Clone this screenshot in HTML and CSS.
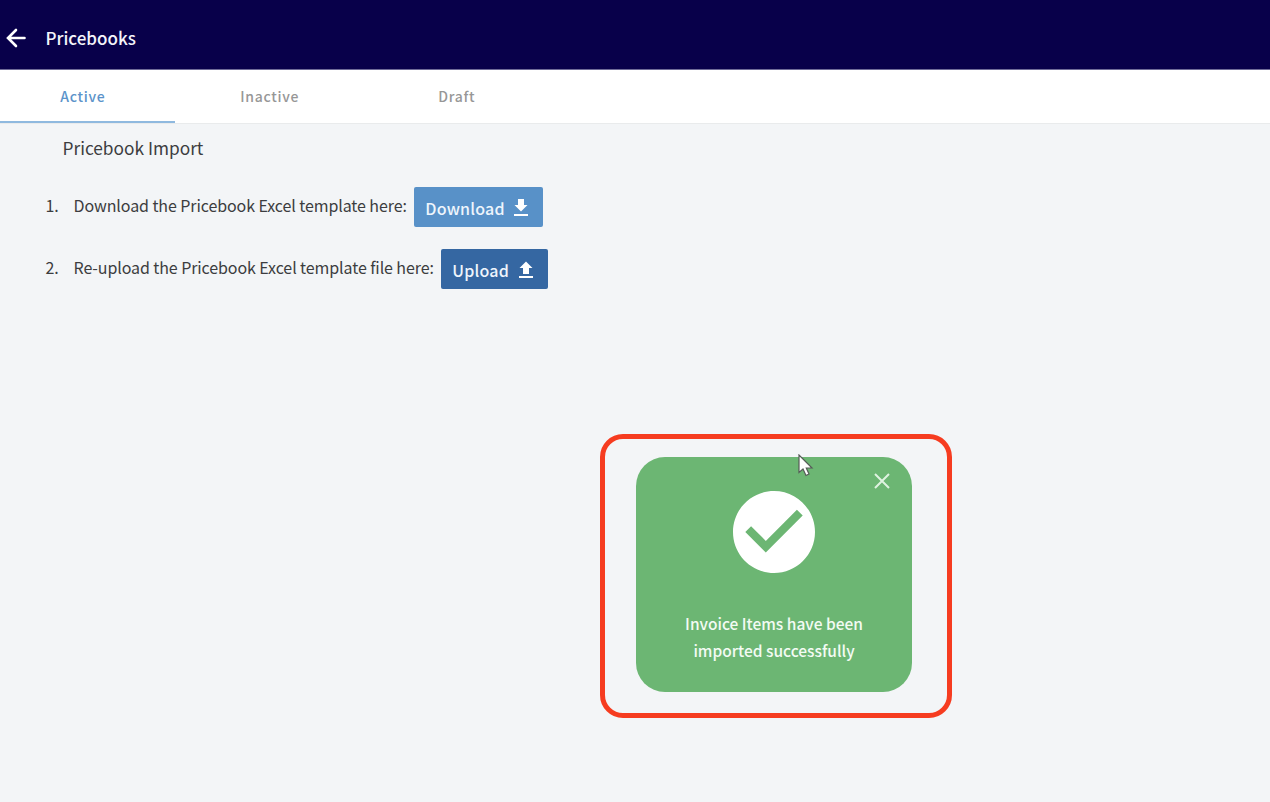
FILE: index.html
```html
<!DOCTYPE html>
<html lang="en">
<head>
    <meta charset="UTF-8">
    <meta name="viewport" content="width=device-width, initial-scale=1.0">
    <title>Pricebooks</title>
    <link rel="stylesheet" href="styles.css">
</head>
<body>
    <header class="top-bar">
        <a class="back-btn" href="#" aria-label="Back">
            <svg viewBox="0 0 20 20"><path d="M10 2 L2 10 L10 18 M2.5 10 H18.5"/></svg>
        </a>
        <h1>Pricebooks</h1>
    </header>
    <nav class="tabs">
        <a class="tab active" href="#">Active</a>
        <a class="tab" href="#">Inactive</a>
        <a class="tab" href="#">Draft</a>
    </nav>
    <main class="content">
        <h2>Pricebook Import</h2>
        <div class="step">
            <span class="step-number">1.</span>
            <span class="step-text">Download the Pricebook Excel template here:</span>
            <button class="btn download-btn">
                Download
                <svg viewBox="0 0 24 24"><path d="M18.5 9H15V3H9v6H5.5l6.5 6.5L18.5 9zM5 18v2h14v-2H5z"/></svg>
            </button>
        </div>
        <div class="step">
            <span class="step-number">2.</span>
            <span class="step-text">Re-upload the Pricebook Excel template file here:</span>
            <button class="btn upload-btn">
                Upload
                <svg viewBox="0 0 24 24"><path d="M9 16h6v-6h3.5L12 3.5 5.5 10H9zm-4 2h14v2H5z"/></svg>
            </button>
        </div>
    </main>

    <div class="toast-frame">
        <div class="toast">
            <button class="close-btn" aria-label="Close">
                <svg viewBox="0 0 16 16"><path d="M1 1 L15 15 M15 1 L1 15"/></svg>
            </button>
            <svg class="check-icon" viewBox="2 2 20 20"><path d="M12 2C6.48 2 2 6.48 2 12s4.48 10 10 10 10-4.48 10-10S17.52 2 12 2zm-2 15l-5-5 1.41-1.41L10 14.17l7.59-7.59L19 8l-9 9z"/></svg>
            <p>Invoice Items have been<br>imported successfully</p>
        </div>
    </div>
    <svg class="cursor" viewBox="0 0 16 24"><path d="M1 1 V18.5 L5 15 L8 21.5 L11 20 L8.3 14 H14 Z"/></svg>
</body>
</html>
```

FILE: styles.css
```css
* {
    box-sizing: border-box;
}
body {
    font-family: "Noto Sans CJK SC", "Noto Sans", sans-serif;
    margin: 0;
    height: 802px;
    background-color: #f3f5f7;
    color: #3c3d40;
    overflow: hidden;
}
h1, h2, p {
    margin: 0;
    font-weight: 400;
}
.top-bar {
    display: flex;
    align-items: center;
    height: 70px;
    padding: 6px 0 0 6px;
    background-color: #08004a;
    border-bottom: 1px solid #6f6b98;
    color: #f4f4fa;
}
.back-btn {
    display: flex;
    width: 39.5px;
}
.back-btn svg {
    width: 20px;
    height: 20px;
    fill: none;
    stroke: #fff;
    stroke-width: 2.6;
    stroke-linecap: round;
}
.top-bar h1 {
    font-size: 17px;
    font-weight: 500;
    line-height: 24px;
}
.tabs {
    display: flex;
    gap: 12px;
    height: 54px;
    background-color: #fff;
    border-bottom: 1px solid #e9ebec;
}
.tab {
    width: 175px;
    height: 53px;
    padding-right: 9.5px;
    border-bottom: 2px solid transparent;
    color: #979797;
    font-size: 14px;
    font-weight: 500;
    line-height: 53px;
    letter-spacing: 0.7px;
    text-align: center;
    text-decoration: none;
}
.tab.active {
    color: #5b93ca;
    border-bottom-color: #8fb9df;
}
.content {
    padding: 11px 0 0 45.5px;
}
.content h2 {
    margin-bottom: 26px;
    padding-left: 17px;
    font-size: 17.3px;
    line-height: 26px;
}
.step {
    display: flex;
    align-items: flex-start;
    height: 40px;
    margin-bottom: 22px;
    font-size: 16px;
    line-height: 37px;
    letter-spacing: -0.09px;
}
.step-number {
    width: 28px;
}
.step-text {
    margin-right: 7.5px;
}
.btn {
    display: flex;
    align-items: center;
    justify-content: space-between;
    height: 40px;
    padding: 2px 10px 0 11px;
    border: none;
    border-radius: 2px;
    color: #eef5fc;
    font-family: inherit;
    font-size: 16px;
    font-weight: 500;
    letter-spacing: 0.2px;
    cursor: pointer;
}
.btn svg {
    flex-shrink: 0;
    width: 24px;
    height: 24px;
    fill: #fff;
}
.download-btn {
    width: 129px;
    background-color: #5891c8;
}
.upload-btn {
    width: 107px;
    background-color: #3567a2;
}
.toast-frame {
    position: absolute;
    top: 434px;
    left: 600px;
    width: 352px;
    height: 284px;
    padding: 18px 31px;
    border: 5px solid #f63c20;
    border-radius: 23px;
}
.toast {
    position: relative;
    display: flex;
    flex-direction: column;
    align-items: center;
    width: 276px;
    height: 235px;
    padding-top: 34px;
    border-radius: 29px;
    background-color: #6cb673;
    color: #f3fbf3;
}
.toast p {
    margin-top: 37px;
    font-size: 15.5px;
    line-height: 27px;
    font-weight: 500;
    text-align: center;
}
.check-icon {
    width: 82px;
    height: 82px;
    fill: #fff;
}
.close-btn {
    position: absolute;
    top: 16px;
    right: 22px;
    display: flex;
    padding: 0;
    border: none;
    background: none;
    cursor: pointer;
}
.close-btn svg {
    width: 16px;
    height: 16px;
    stroke: #dff3e0;
    stroke-width: 2;
}
.cursor {
    position: absolute;
    top: 454px;
    left: 798px;
    width: 16px;
    height: 24px;
    fill: #fff;
    stroke: #555b57;
    stroke-width: 1.2;
}
```
